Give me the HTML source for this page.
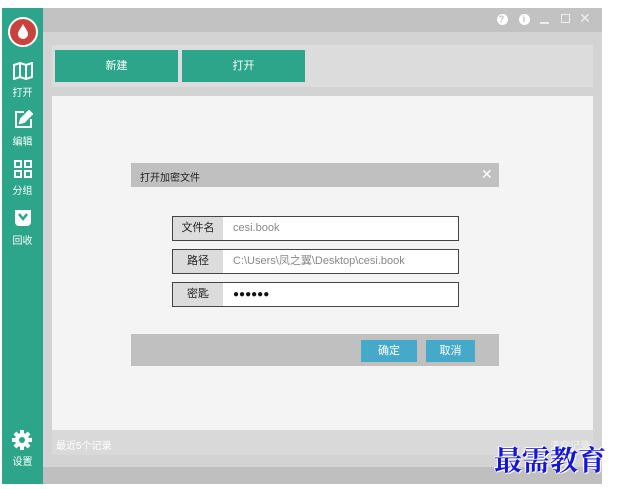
<!DOCTYPE html><html><head><meta charset="utf-8"><style>
*{margin:0;padding:0;box-sizing:border-box}
body{width:618px;height:489px;background:#fff;position:relative;overflow:hidden;font-family:"Liberation Sans","Noto Sans CJK SC",sans-serif;font-size:11px}
.a{position:absolute}
.side{left:2px;top:8px;width:41px;height:476px;background:#2ca58a;color:#fff}
.side .t{position:absolute;width:41px;text-align:center;font-size:10px}
.btn{background:#2ca58a;color:#fff;text-align:center;line-height:32px;font-size:11px}
.inp{left:172px;width:287px;height:25px;border:1px solid #444;background:#fff}
.inp .l{position:absolute;left:0;top:0;width:50px;height:23px;background:#dcdcdc;text-align:center;line-height:23px;color:#222}
.inp .v{position:absolute;left:60px;top:0;line-height:23px;color:#888}
.db{background:#46a9c9;color:#fff;text-align:center;line-height:22px;height:22px;top:340px}
</style></head><body>
<div class="a" style="left:43px;top:8px;width:559px;height:476px;background:#d3d3d3"></div>
<div class="a" style="left:43px;top:8px;width:559px;height:24px;background:#c2c2c2"></div>
<div class="a" style="left:497px;top:12px;color:#fff;font-size:12px;letter-spacing:2px">
<span style="display:inline-block;width:11px;height:11px;border-radius:50%;background:#fff;color:#c2c2c2;font-size:9px;line-height:11px;text-align:center;font-weight:bold;vertical-align:middle">?</span>
<span style="display:inline-block;width:11px;height:11px;border-radius:50%;background:#fff;color:#c2c2c2;font-size:9px;line-height:11px;text-align:center;font-weight:bold;vertical-align:middle;margin-left:6px">i</span></div>
<div class="a" style="left:540px;top:22px;width:9px;height:2px;background:#eee"></div>
<div class="a" style="left:561px;top:14px;width:9px;height:9px;border:1px solid #eee"></div>
<div class="a" style="left:579px;top:10px;color:#eee;font-size:14px">✕</div>
<div class="a" style="left:52px;top:45px;width:541px;height:42px;background:#dcdcdc"></div>
<div class="a btn" style="left:55px;top:50px;width:123px;height:32px">新建</div>
<div class="a btn" style="left:182px;top:50px;width:123px;height:32px">打开</div>
<div class="a" style="left:52px;top:96px;width:541px;height:334px;background:#f4f4f4"></div>
<div class="a" style="left:52px;top:430px;width:541px;height:25px;background:#d9d9d9"></div>
<div class="a" style="left:56px;top:437px;color:#fff;font-size:10px">最近5个记录</div>
<div class="a" style="left:550px;top:437px;color:#f2f2f2;font-size:10px">清空记录</div>
<div class="a" style="left:43px;top:467px;width:559px;height:17px;background:#bfbfbf"></div>
<div class="a side">
<div class="a" style="left:6px;top:9px;width:30px;height:30px;border-radius:50%;background:#c9433d;border:2px solid #fff"></div>
<svg class="a" style="left:15px;top:15px" width="12" height="16" viewBox="0 0 12 16"><path d="M6 1C4 5 1 8 1 11a5 5 0 0 0 10 0C11 8 8 5 6 1z" fill="#fff"/></svg>
<svg class="a" style="left:11px;top:54px" width="20" height="18" viewBox="0 0 20 18" fill="none" stroke="#fff" stroke-width="2"><path d="M1 3l6-2 6 2 6-2v14l-6 2-6-2-6 2z M7 1v14 M13 3v14"/></svg>
<div class="t" style="top:76px">打开</div>
<svg class="a" style="left:12px;top:102px" width="19" height="19" viewBox="0 0 19 19" fill="none" stroke="#fff" stroke-width="2"><path d="M10 2H2v15h15V9"/><path d="M6 13l1-4 8-8 3 3-8 8z" fill="#fff"/></svg>
<div class="t" style="top:125px">编辑</div>
<svg class="a" style="left:12px;top:152px" width="18" height="18" viewBox="0 0 18 18" fill="none" stroke="#fff" stroke-width="2"><rect x="1" y="1" width="6" height="6"/><rect x="11" y="1" width="6" height="6"/><rect x="1" y="11" width="6" height="6"/><rect x="11" y="11" width="6" height="6"/></svg>
<div class="t" style="top:174px">分组</div>
<svg class="a" style="left:12px;top:200px" width="18" height="18" viewBox="0 0 18 18"><path d="M1 2h16v12a4 4 0 0 1-4 4H5a4 4 0 0 1-4-4z" fill="#fff"/><path d="M5 6l4 5 4-5" stroke="#2ca58a" stroke-width="2.5" fill="none"/></svg>
<div class="t" style="top:224px">回收</div>
<svg class="a" style="left:10px;top:422px" width="20" height="20" viewBox="0 0 20 20"><g fill="#fff"><circle cx="10" cy="10" r="7"/><rect x="8" y="0" width="4" height="20"/><rect x="0" y="8" width="20" height="4"/><rect x="8" y="0" width="4" height="20" transform="rotate(45 10 10)"/><rect x="8" y="0" width="4" height="20" transform="rotate(-45 10 10)"/></g><circle cx="10" cy="10" r="3" fill="#2ca58a"/></svg>
<div class="t" style="top:445px">设置</div>
</div>
<div class="a" style="left:131px;top:163px;width:368px;height:203px;background:#f4f4f4"></div>
<div class="a" style="left:131px;top:163px;width:368px;height:24px;background:#c0c0c0"></div>
<div class="a" style="left:140px;top:169px;color:#222;font-size:10px">打开加密文件</div>
<div class="a" style="left:481px;top:166px;color:#fff;font-size:14px">✕</div>
<div class="a inp" style="top:216px"><div class="l">文件名</div><div class="v">cesi.book</div></div>
<div class="a inp" style="top:249px"><div class="l">路径</div><div class="v">C:\Users\凤之翼\Desktop\cesi.book</div></div>
<div class="a inp" style="top:282px"><div class="l">密匙</div><div class="v" style="color:#111;font-size:10px;letter-spacing:0">●●●●●●</div></div>
<div class="a" style="left:131px;top:334px;width:368px;height:32px;background:#c0c0c0"></div>
<div class="a db" style="left:361px;width:56px">确定</div>
<div class="a db" style="left:426px;width:49px">取消</div>
<div class="a" style="left:494px;top:439px;color:#1515d8;font-size:28px;font-weight:bold;font-family:'Noto Serif CJK SC',serif;text-shadow:0 0 2px #fff,1px 1px 0 #fff,-1px -1px 0 #fff">最需教育</div>
</body></html>
